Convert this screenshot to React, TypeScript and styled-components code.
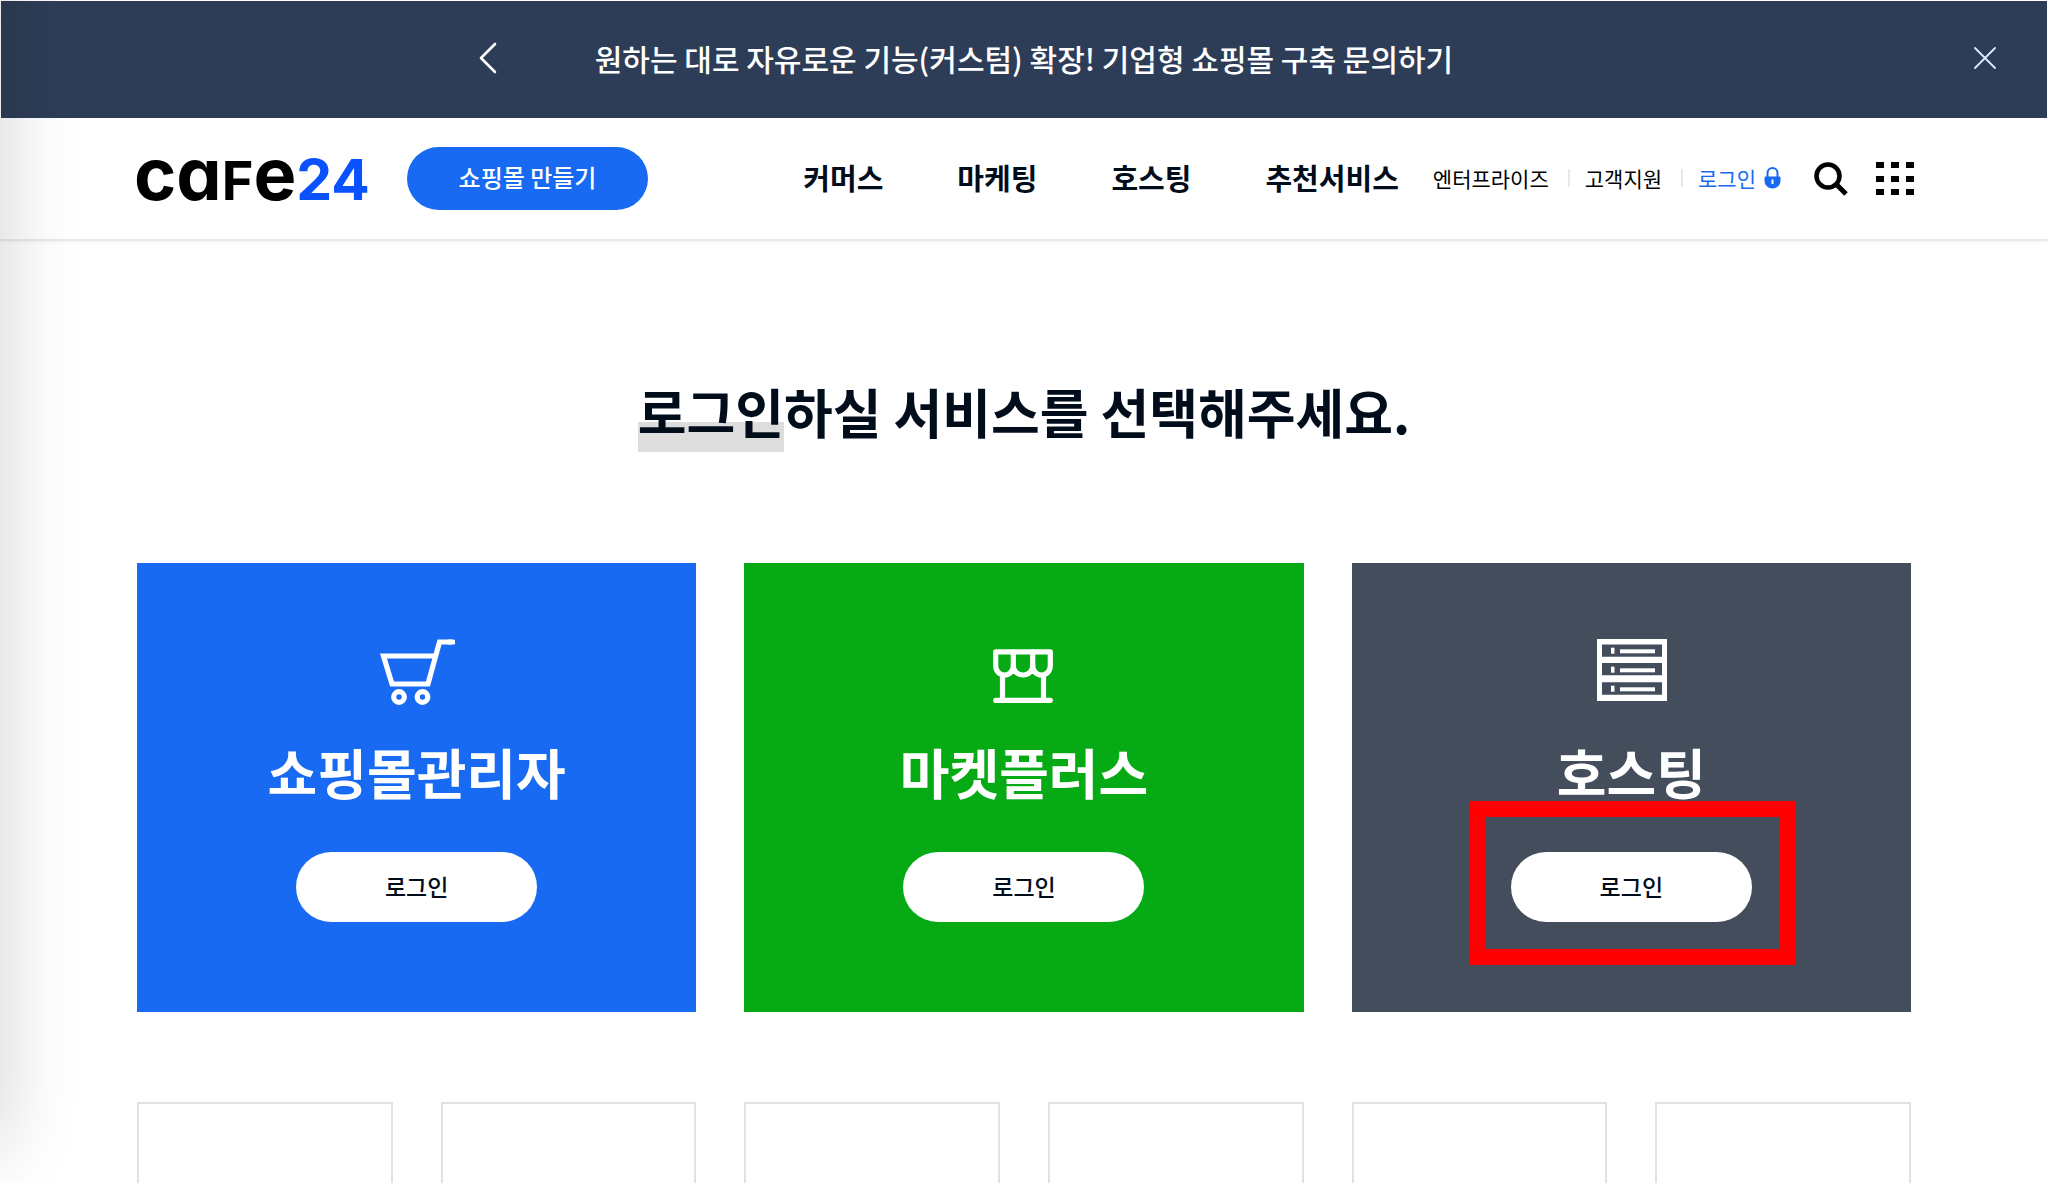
import React from "react";
import styled, { createGlobalStyle } from "styled-components";

const GlobalStyle = createGlobalStyle`
  *, *::before, *::after { box-sizing: border-box; }
  body {
    margin: 0;
    background: #fff;
    color: #020d1c;
    font-family: "Noto Sans CJK KR", "Noto Sans", sans-serif;
    overflow-x: hidden;
  }
  a { color: inherit; text-decoration: none; }
  button { font-family: inherit; border: 0; padding: 0; cursor: pointer; background: none; color: inherit; }
  svg { display: block; }
`;

const Page = styled.div`
  min-height: 100vh;
  display: flex;
  flex-direction: column;
`;

const EdgeShadow = styled.div`
  position: fixed;
  top: -60px;
  bottom: 36px;
  left: -60px;
  width: 60px;
  box-shadow: 0 0 80px rgba(0, 0, 0, 0.2);
  pointer-events: none;
  z-index: 5;
`;

const Container = styled.div`
  width: calc(100% - 96px);
  max-width: 1774px;
  margin: 0 auto;
`;

const Banner = styled.aside`
  display: grid;
  grid-template-columns: 1fr auto 1fr;
  align-items: center;
  height: 117px;
  margin: 1px 1px 0;
  padding-bottom: 4px;
  background: #2e3d57;
  color: #fff;
`;

const BannerLink = styled.a`
  font-size: 30px;
  line-height: 44px;
  font-weight: 500;
  white-space: nowrap;
`;

const BannerButton = styled.button<{ $side: "left" | "right" }>`
  justify-self: end;
  margin-right: ${(p) => (p.$side === "left" ? 94 : 47)}px;
  padding: 4px;
`;

const Header = styled.header`
  background: #fff;
  border-bottom: 2px solid #ebebeb;
  box-shadow: 0 1px 3px rgba(0, 0, 0, 0.05);
`;

const HeaderRow = styled(Container)`
  display: flex;
  align-items: center;
  max-width: 1780px;
  height: 121px;
`;

const Logo = styled.a`
  display: flex;
  align-items: baseline;
  width: 273px;
  padding-bottom: 2px;
  font-family: Inter, sans-serif;
  font-weight: 700;
  font-size: 72px;
  line-height: 80px;
  color: #000;
  font-feature-settings: "cv11" 1;
  white-space: nowrap;
`;

const LogoCap = styled.span`
  font-size: 54px;
`;

const LogoNumber = styled.span`
  font-size: 57px;
  color: #0b52ff;
`;

const CreateButton = styled.button`
  width: 241px;
  height: 63px;
  padding-bottom: 4px;
  border-radius: 32px;
  background: #186af2;
  color: #fff;
  font-size: 24px;
  line-height: 36px;
  font-weight: 500;
`;

const MainNav = styled.nav`
  display: flex;
  gap: 74px;
  margin-left: auto;
  padding-bottom: 4px;
  font-size: 29px;
  line-height: 44px;
  font-weight: 700;
  white-space: nowrap;
`;

const UtilityNav = styled.nav`
  display: flex;
  align-items: center;
  margin-left: 34px;
  padding-bottom: 2px;
  font-size: 21px;
  line-height: 32px;
  color: #000;
  white-space: nowrap;
`;

const UtilityLink = styled.a<{ $accent?: boolean }>`
  display: flex;
  align-items: center;
  gap: 8px;
  color: ${(p) => (p.$accent ? "#186af2" : "#000")};

  & + & {
    margin-left: 19px;
    padding-left: 17px;
    background: linear-gradient(#e8e8e8, #e8e8e8) left center / 2px 18px no-repeat;
  }
`;

const IconButton = styled.button<{ $gap: number }>`
  margin-left: ${(p) => p.$gap}px;
`;

const Main = styled.main`
  flex: 1;
  display: flex;
  flex-direction: column;
`;

const Title = styled.h1`
  margin: 0;
  padding: 135px 24px 111px;
  text-align: center;
  font-size: 53px;
  line-height: 70px;
  font-weight: 700;
`;

const Marked = styled.span`
  display: inline-block;
  padding-bottom: 6px;
  background: linear-gradient(#ddd, #ddd) left bottom / 100% 30px no-repeat;
`;

const Cards = styled(Container)`
  display: grid;
  grid-template-columns: repeat(3, 1fr);
  gap: 48px;
`;

const Card = styled.section<{ $color: string }>`
  display: flex;
  flex-direction: column;
  align-items: center;
  padding: 76px 24px 90px;
  background: ${(p) => p.$color};
  color: #fff;
`;

const CardTitle = styled.h2`
  margin: 35px 0 48px;
  font-size: 54px;
  line-height: 64px;
  font-weight: 700;
  white-space: nowrap;
`;

const LoginSlot = styled.div`
  position: relative;
`;

const LoginButton = styled.button`
  display: block;
  width: 241px;
  height: 70px;
  padding-bottom: 2px;
  border-radius: 35px;
  background: #fff;
  color: #020d1c;
  font-size: 23px;
  line-height: 36px;
  font-weight: 500;
`;

const Highlight = styled.div`
  position: absolute;
  inset: -51px -43px -43px -42px;
  border: 16px solid #f00;
  pointer-events: none;
`;

const Tiles = styled(Container)`
  flex: 1;
  display: grid;
  grid-template-columns: repeat(6, 1fr);
  gap: 48px;
  padding-top: 90px;
`;

const Tile = styled.div`
  min-height: 80px;
  border: 2px solid #e2e2e2;
  border-bottom: 0;
`;

const ChevronIcon = () => (
  <svg width="18" height="32" viewBox="0 0 18 32" fill="none" stroke="#fff" strokeWidth="2.6" strokeLinecap="round" strokeLinejoin="round">
    <path d="M16 2 2 16l14 14" />
  </svg>
);

const CloseIcon = () => (
  <svg width="22" height="22" viewBox="0 0 22 22" fill="none" stroke="#dfeaff" strokeWidth="1.8" strokeLinecap="round">
    <path d="M1 1l20 20M21 1 1 21" />
  </svg>
);

const LockIcon = () => (
  <svg width="17" height="22" viewBox="0 0 17 22">
    <path d="M3.5 10V6a5 5 0 0 1 10 0v4" fill="none" stroke="#186af2" strokeWidth="2" />
    <path d="M1.5 9.5h14a1 1 0 0 1 1 1V14a8 7.500 0 0 1-16 0v-3.500a1 1 0 0 1 1-1z" fill="#186af2" />
    <path d="M7.500 12.500h2v4.500h-2z" fill="#fff" />
  </svg>
);

const SearchIcon = () => (
  <svg width="34" height="34" viewBox="0 0 34 34" fill="none" stroke="#000">
    <circle cx="14" cy="14" r="11.500" strokeWidth="4.500" />
    <path d="M22 22l10 10" strokeWidth="5" />
  </svg>
);

const MenuIcon = () => (
  <svg width="38" height="34" viewBox="0 0 38 34">
    {[0, 14, 27].map((y) =>
      [0, 15, 30].map((x) => <rect key={`${x}-${y}`} x={x} y={y} width="8" height="6" fill="#000" />)
    )}
  </svg>
);

const CartIcon = () => (
  <svg width="76" height="66" viewBox="0 0 76 66" fill="none" stroke="#fff" strokeWidth="5.200">
    <path d="M57 17H4.500l8.500 28h36L60.500 3H73" />
    <path d="M70 3h4" strokeLinecap="round" />
    <circle cx="20" cy="58" r="5.300" />
    <circle cx="43.500" cy="58" r="5.300" />
  </svg>
);

const StoreIcon = () => (
  <svg width="76" height="66" viewBox="0 0 76 66" fill="none" stroke="#fff" strokeWidth="5.200" strokeLinecap="round" strokeLinejoin="round">
    <g transform="translate(7 10)">
      <path d="M2.700 2.800h54.600V17a8.800 9 0 0 1-17.600 0 9.700 9 0 0 1-19.400 0 8.800 9 0 0 1-17.600 0z" />
      <path d="M20.300 3v14M39.700 3v14M9.500 27v24M50.500 27v24M2.700 51.300h54.600" />
    </g>
  </svg>
);

const ServerIcon = () => (
  <svg width="76" height="66" viewBox="0 0 76 66" fill="#fff">
    <path
      fillRule="evenodd"
      d="M4 0h70v62H4zM9 5.500v12.300h60V5.500zM9 24v12.300h60V24zM9 43.300v12.400h60V43.300z"
    />
    {[8, 27, 46].map((y) => (
      <g key={y}>
        <rect x="18" y={y + 0.7} width="3.500" height="6" />
        <rect x="27" y={y + 2.3} width="35" height="4" />
      </g>
    ))}
  </svg>
);

const services = [
  { name: "쇼핑몰관리자", color: "#186af2", icon: <CartIcon /> },
  { name: "마켓플러스", color: "#06aa15", icon: <StoreIcon /> },
  { name: "호스팅", color: "#444d5c", icon: <ServerIcon />, highlighted: true },
];

const menu = ["커머스", "마케팅", "호스팅", "추천서비스"];

export default function App() {
  return (
    <Page>
      <GlobalStyle />
      <EdgeShadow />
      <Banner>
        <BannerButton $side="left" aria-label="이전">
          <ChevronIcon />
        </BannerButton>
        <BannerLink href="#">원하는 대로 자유로운 기능(커스텀) 확장! 기업형 쇼핑몰 구축 문의하기</BannerLink>
        <BannerButton $side="right" aria-label="닫기">
          <CloseIcon />
        </BannerButton>
      </Banner>
      <Header>
        <HeaderRow>
          <Logo href="#">
            ca<LogoCap>F</LogoCap>e<LogoNumber>24</LogoNumber>
          </Logo>
          <CreateButton>쇼핑몰 만들기</CreateButton>
          <MainNav>
            {menu.map((item) => (
              <a href="#" key={item}>{item}</a>
            ))}
          </MainNav>
          <UtilityNav>
            <UtilityLink href="#">엔터프라이즈</UtilityLink>
            <UtilityLink href="#">고객지원</UtilityLink>
            <UtilityLink href="#" $accent>
              로그인
              <LockIcon />
            </UtilityLink>
          </UtilityNav>
          <IconButton $gap={33} aria-label="검색">
            <SearchIcon />
          </IconButton>
          <IconButton $gap={28} aria-label="전체 메뉴">
            <MenuIcon />
          </IconButton>
        </HeaderRow>
      </Header>
      <Main>
        <Title>
          <Marked>로그인</Marked>하실 서비스를 선택해주세요.
        </Title>
        <Cards>
          {services.map((s) => (
            <Card key={s.name} $color={s.color}>
              {s.icon}
              <CardTitle>{s.name}</CardTitle>
              <LoginSlot>
                <LoginButton aria-label={`${s.name} 로그인`}>로그인</LoginButton>
                {s.highlighted && <Highlight />}
              </LoginSlot>
            </Card>
          ))}
        </Cards>
        <Tiles>
          {Array.from({ length: 6 }, (_, i) => (
            <Tile key={i} />
          ))}
        </Tiles>
      </Main>
    </Page>
  );
}
